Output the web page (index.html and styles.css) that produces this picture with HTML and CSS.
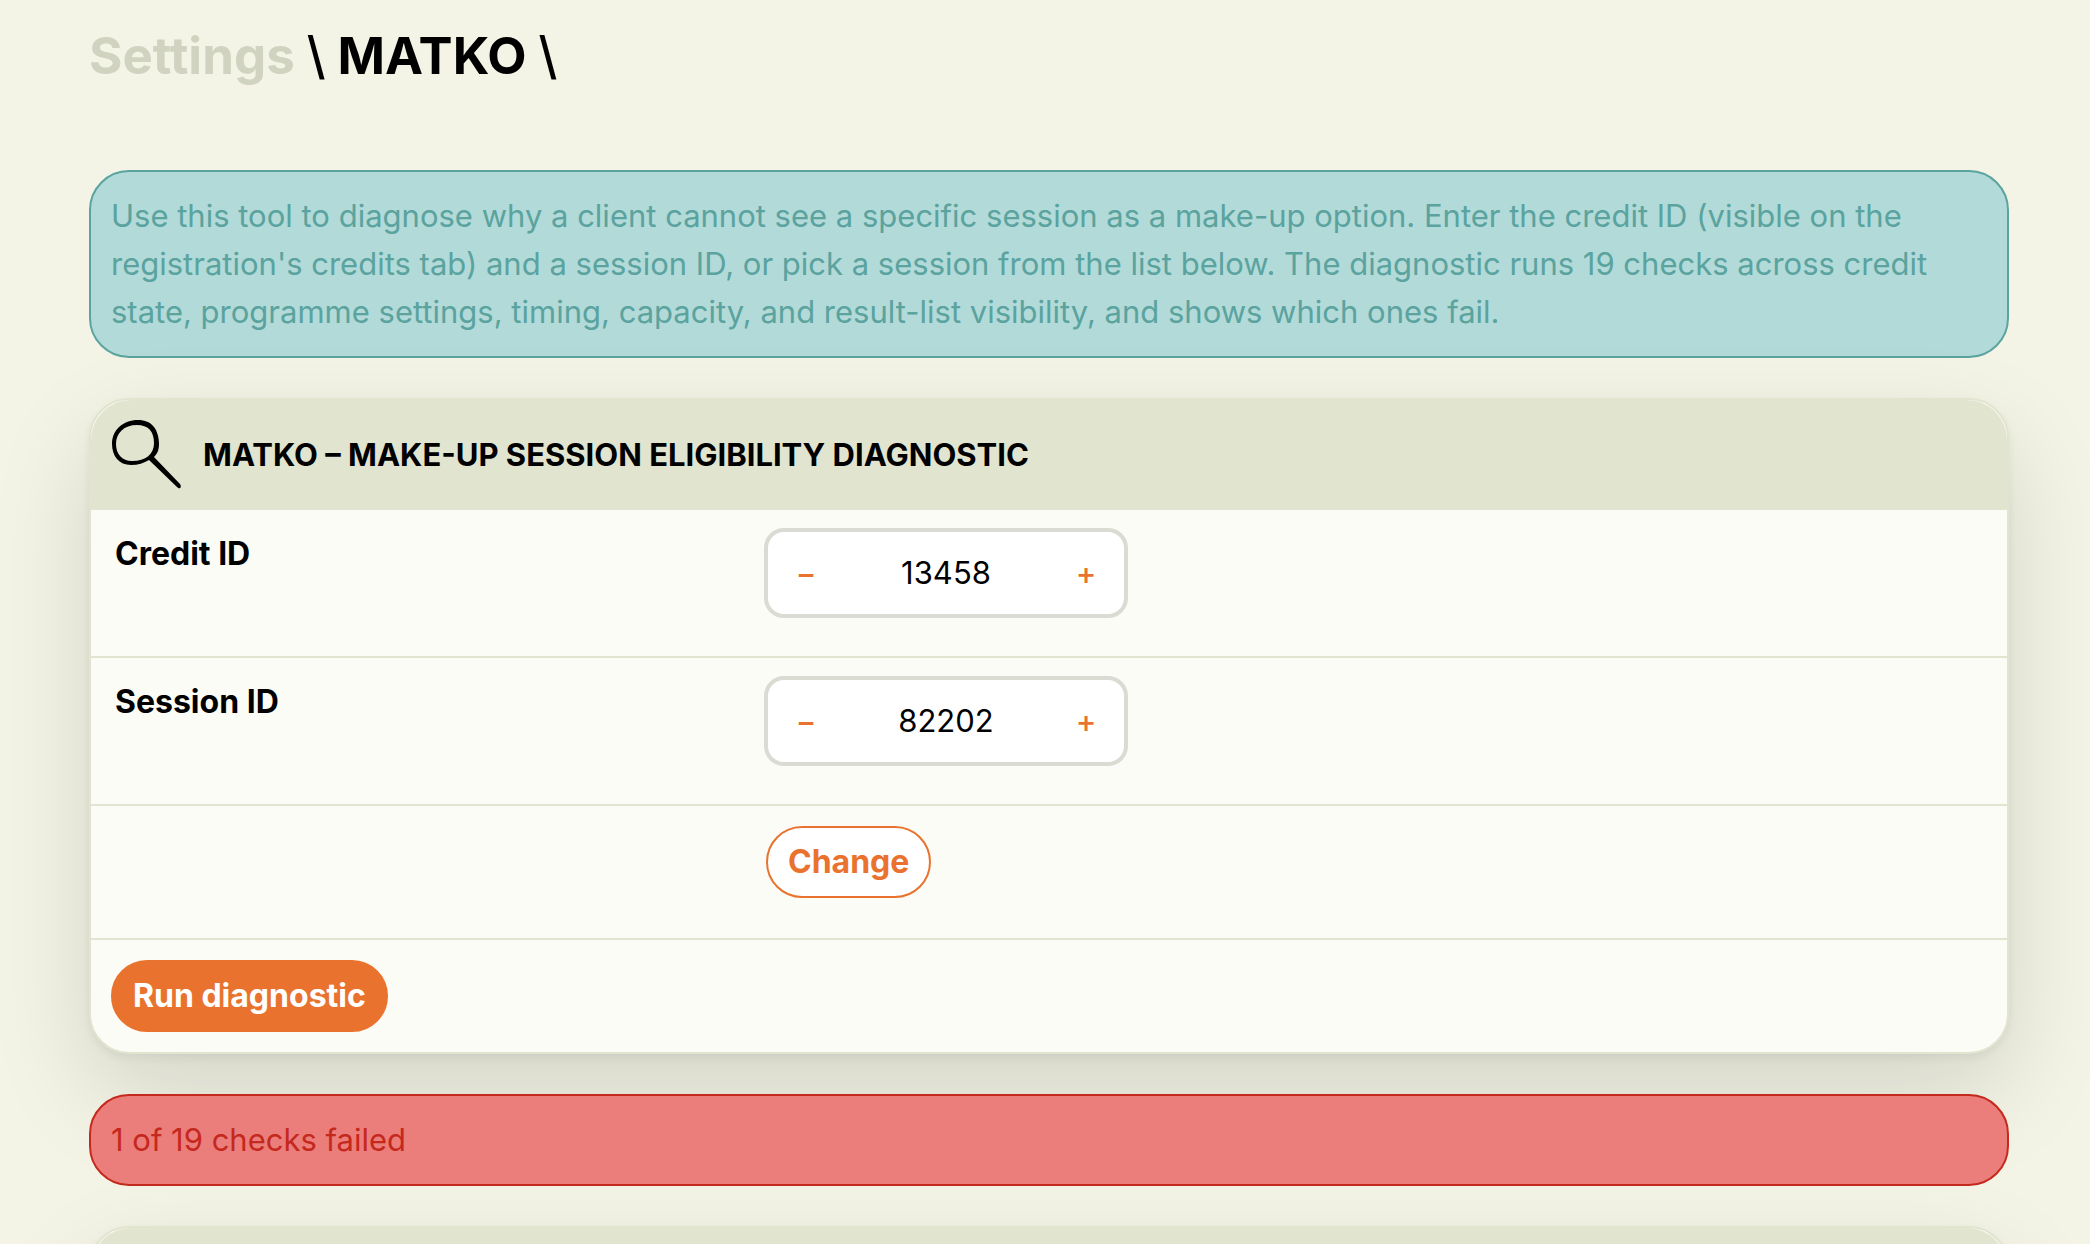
FILE: index.html
```html
<!DOCTYPE html>
<html lang="en">
<head>
  <meta charset="UTF-8" />
  <meta name="viewport" content="width=device-width, initial-scale=1.0" />
  <title>MATKO</title>
  <link rel="stylesheet" href="styles.css">
</head>
<body>
  <main class="page">
    <h1 class="breadcrumb">
      <a href="#">Settings</a>
      <span class="slash">\</span>
      <span>MATKO</span>
      <span class="slash">\</span>
    </h1>

    <p class="alert alert-info">Use this tool to diagnose why a client cannot see a specific session as a make-up option. Enter the credit ID (visible on the registration's credits tab) and a session ID, or pick a session from the list below. The diagnostic runs 19 checks across credit state, programme settings, timing, capacity, and result-list visibility, and shows which ones fail.</p>

    <form class="card">
      <header class="card-header">
        <svg class="icon" viewBox="0 0 72 72" aria-hidden="true">
          <path fill-rule="evenodd" d="M27 1C34 1 39 3 43 8C46 12 48 18 48 25C48 30 47 34 43 38L69 65C71 68 69 71 66 68L38 41C33 44 27 46 20 46C8 46 1 37 1 25C1 11 12 1 27 1ZM26 6C13 6 5 14 5 25C5 35 11 42 21 42C35 42 43 35 43 24C43 12 37 6 26 6Z"/>
        </svg>
        <h2>MATKO – MAKE-UP SESSION ELIGIBILITY DIAGNOSTIC</h2>
      </header>
      <div class="row">
        <label for="credit">Credit ID</label>
        <div class="stepper">
          <button type="button" aria-label="Decrease credit ID">−</button>
          <input type="text" inputmode="numeric" id="credit" value="13458" />
          <button type="button" aria-label="Increase credit ID">+</button>
        </div>
      </div>
      <div class="row">
        <label for="session">Session ID</label>
        <div class="stepper">
          <button type="button" aria-label="Decrease session ID">−</button>
          <input type="text" inputmode="numeric" id="session" value="82202" />
          <button type="button" aria-label="Increase session ID">+</button>
        </div>
      </div>
      <div class="row row-change">
        <button type="button" class="btn btn-outline">Change</button>
      </div>
      <div class="card-footer">
        <button type="submit" class="btn btn-primary">Run diagnostic</button>
      </div>
    </form>

    <p class="alert alert-error">1 of 19 checks failed</p>

    <section class="card">
      <header class="card-header"></header>
    </section>
  </main>
</body>
</html>
```

FILE: styles.css
```css
* {
  box-sizing: border-box;
}
body {
  margin: 0;
  background: #f3f4e5;
  color: #000;
  font-family: Inter, "Liberation Sans", sans-serif;
  font-size: 31px;
  line-height: 48px;
}
button, input {
  font: inherit;
}
.page {
  display: flex;
  flex-direction: column;
  gap: 40px;
  padding: 20px 81px 40px 89px;
}
.breadcrumb {
  display: flex;
  gap: 12px;
  margin: 0 0 38px;
  font-size: 51px;
  font-weight: 700;
  line-height: 72px;
}
.breadcrumb a {
  color: #d1d3c1;
  text-decoration: none;
}
.breadcrumb .slash {
  font-weight: 500;
}
.alert {
  margin: 0;
  padding: 20px;
  border: 2px solid;
  border-radius: 40px;
}
.alert-info {
  color: #5aa39e;
  background: #b2dad9;
}
.alert-error {
  position: relative;
  color: #c5281c;
  background: #eb7e7b;
}
.card {
  border: 2px solid #e1e4cf;
  border-radius: 40px;
  background: #fbfcf5;
  box-shadow: 0 4px 8px rgba(0, 0, 0, 0.06), 0 40px 100px rgba(0, 0, 0, 0.13);
}
.card-header {
  display: flex;
  align-items: center;
  gap: 20px;
  min-height: 110px;
  padding: 0 20px;
  border-radius: 40px 40px 0 0;
  background: #e1e4cf;
}
.card-header h2 {
  margin: 0;
  font-size: 31px;
}
.icon {
  width: 72px;
  height: 72px;
}
.row {
  display: grid;
  grid-template-columns: 649px 1fr;
  align-items: start;
  padding: 18px 24px 38px;
  border-bottom: 2px solid #e1e4cf;
}
.row label {
  font-size: 32px;
  font-weight: 700;
  padding-top: 2px;
}
.row-change {
  padding: 20px 24px 40px;
}
.row-change .btn {
  grid-column: 2;
  justify-self: start;
  margin-left: 2px;
}
.stepper {
  display: flex;
  width: 364px;
  height: 90px;
  border: 4px solid #dadcd4;
  border-radius: 20px;
  background: #fff;
}
.stepper button {
  width: 76px;
  padding: 0;
  border: 0;
  background: none;
  color: #e9732e;
  font-weight: 500;
}
.stepper input {
  flex: 1;
  min-width: 0;
  padding: 0;
  border: 0;
  background: none;
  text-align: center;
}
.btn {
  height: 72px;
  padding: 0 20px;
  border: 2px solid #e9732e;
  border-radius: 36px;
  font-size: 32px;
  font-weight: 700;
}
.btn-outline {
  background: #fff;
  color: #e9732e;
}
.btn-primary {
  background: #e9732e;
  color: #fff;
}
.card-footer {
  padding: 20px;
}
```
